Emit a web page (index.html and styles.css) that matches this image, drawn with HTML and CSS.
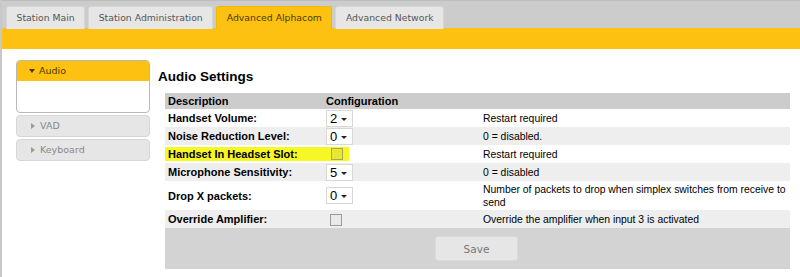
FILE: index.html
```html
<!DOCTYPE html>
<html lang="en">
<head>
    <meta charset="UTF-8">
    <meta name="viewport" content="width=device-width, initial-scale=1.0">
    <title>Advanced Alphacom - Audio</title>
    <link rel="stylesheet" href="styles.css">
</head>
<body>

    <div class="page">
        <div class="tabbar">
            <div class="tab">Station Main</div>
            <div class="tab">Station Administration</div>
            <div class="tab active">Advanced Alphacom</div>
            <div class="tab">Advanced Network</div>
        </div>
        <div class="subbar"></div>

        <div class="content">
            <div class="sidebar">
                <div class="menu open">
                    <div class="menu-head"><span class="arrow-down"></span>Audio</div>
                    <div class="menu-body"></div>
                </div>
                <div class="menu">
                    <div class="menu-head"><span class="arrow-right"></span>VAD</div>
                </div>
                <div class="menu">
                    <div class="menu-head"><span class="arrow-right"></span>Keyboard</div>
                </div>
            </div>

            <div class="main">
                <h2>Audio Settings</h2>
                <table class="settings">
                    <tr class="head">
                        <th class="c-desc">Description</th>
                        <th class="c-conf">Configuration</th>
                        <th class="c-note"></th>
                    </tr>
                    <tr>
                        <td class="label">Handset Volume:</td>
                        <td><span class="sel">2<i class="caret"></i></span></td>
                        <td class="note">Restart required</td>
                    </tr>
                    <tr class="alt">
                        <td class="label">Noise Reduction Level:</td>
                        <td><span class="sel">0<i class="caret"></i></span></td>
                        <td class="note">0 = disabled.</td>
                    </tr>
                    <tr>
                        <td class="label hl-cell"><span class="hl">Handset In Headset Slot:</span></td>
                        <td class="hl-cell"><span class="hl hl-box"><span class="check"></span></span></td>
                        <td class="note">Restart required</td>
                    </tr>
                    <tr class="alt">
                        <td class="label">Microphone Sensitivity:</td>
                        <td><span class="sel">5<i class="caret"></i></span></td>
                        <td class="note">0 = disabled</td>
                    </tr>
                    <tr class="tall">
                        <td class="label">Drop X packets:</td>
                        <td><span class="sel">0<i class="caret"></i></span></td>
                        <td class="note">Number of packets to drop when simplex switches from receive to send</td>
                    </tr>
                    <tr class="alt">
                        <td class="label">Override Amplifier:</td>
                        <td><span class="check"></span></td>
                        <td class="note">Override the amplifier when input 3 is activated</td>
                    </tr>
                    <tr class="foot">
                        <td></td>
                        <td></td>
                        <td><button class="save">Save</button></td>
                    </tr>
                </table>
            </div>
        </div>
    </div>

</body>
</html>
```

FILE: styles.css
```css
body {
    margin: 0;
    background-color: #fff;
    font-family: "DejaVu Sans", Verdana, sans-serif;
    color: #000;
}

.page {
    border-left: 2px solid #c8c8c8;
    min-height: 277px;
    box-sizing: border-box;
}

.tabbar {
    display: flex;
    gap: 3px;
    height: 28px;
    box-sizing: border-box;
    padding: 5px 0 0 4px;
    background-color: #cccccc;
    border-top: 1px solid #bdbdbd;
}

.tab {
    padding: 0 9.5px;
    height: 23px;
    line-height: 22px;
    box-sizing: border-box;
    background-color: #e6e6e6;
    border: 1px solid #d6d6d6;
    border-bottom: none;
    border-radius: 3px 3px 0 0;
    font-size: 9.3px;
    color: #555;
}

.tab.active {
    background-color: #fdc111;
    border-color: #f2b800;
    color: #4a3800;
}

.subbar {
    height: 21px;
    background-color: #fdc111;
}

.content {
    display: flex;
    padding: 11px 10px 0 14px;
}

.sidebar {
    width: 134px;
    flex-shrink: 0;
    display: flex;
    flex-direction: column;
    gap: 2px;
}

.menu {
    background-color: #e6e6e6;
    border: 1px solid #d6d6d6;
    border-radius: 4px;
    overflow: hidden;
}

.menu.open {
    background-color: #fff;
    border-color: #b8b8b8;
}

.menu-head {
    height: 20px;
    line-height: 20px;
    padding-left: 12px;
    font-size: 9.5px;
    color: #888;
}

.menu.open .menu-head {
    background-color: #fdc111;
    color: #4a3800;
}

.menu-body {
    height: 31px;
}

.arrow-down {
    display: inline-block;
    width: 0;
    height: 0;
    border-left: 3px solid transparent;
    border-right: 3px solid transparent;
    border-top: 4px solid #4a3800;
    margin-right: 4px;
    vertical-align: 1px;
}

.arrow-right {
    display: inline-block;
    width: 0;
    height: 0;
    border-top: 3px solid transparent;
    border-bottom: 3px solid transparent;
    border-left: 4px solid #999;
    margin: 0 5px 0 2px;
    vertical-align: 0;
}

.main {
    flex: 1;
    padding-left: 8px;
}

.main h2 {
    margin: 9px 0 8px 0;
    font-family: "Liberation Sans", Arial, sans-serif;
    font-size: 13.5px;
    font-weight: bold;
    line-height: 16px;
}

.settings {
    margin-left: 7px;
    width: 625px;
    border-collapse: collapse;
    font-family: "Liberation Sans", Arial, sans-serif;
    font-size: 11px;
}

.settings th {
    background-color: #cccccc;
    text-align: left;
    font-weight: bold;
    height: 16px;
    padding: 0 3px;
}

.settings .c-desc { width: 152px; }
.settings .c-conf { width: 151px; }

.settings td {
    height: 18px;
    padding: 0 3px;
    vertical-align: middle;
}

.settings tr.alt td {
    background-color: #eeeeee;
}

.settings tr.tall td {
    height: 29px;
}

.settings .label {
    font-weight: bold;
}

.settings td.note {
    font-size: 10.4px;
    line-height: 13px;
    padding-right: 0;
}

.settings td.hl-cell {
    padding: 0;
}

.hl {
    display: block;
    background-color: #f7f725;
    line-height: 14px;
    padding: 0 3px;
}

.hl-box {
    display: inline-block;
    width: 26px;
    height: 14px;
    box-sizing: border-box;
    padding: 1px 0 0 8px;
    vertical-align: middle;
}

.sel {
    display: inline-block;
    position: relative;
    width: 27px;
    height: 17px;
    box-sizing: border-box;
    border: 1px solid #d8d8d8;
    background-color: #fff;
    font-size: 13px;
    line-height: 15px;
    padding-left: 3px;
    vertical-align: middle;
}

.caret {
    position: absolute;
    right: 5px;
    top: 7px;
    width: 0;
    height: 0;
    border-left: 3px solid transparent;
    border-right: 3px solid transparent;
    border-top: 3px solid #222;
}

.check {
    display: inline-block;
    width: 12px;
    height: 12px;
    box-sizing: border-box;
    border: 1px solid #9a9a9a;
    background-color: #e9e9e9;
    vertical-align: middle;
    margin-left: 4px;
}

.hl-box .check {
    margin-left: 0;
    background-color: #e8e830;
    border-color: #a8a850;
    vertical-align: top;
}

.settings tr.foot td {
    background-color: #d3d3d3;
    height: 41px;
}

.save {
    width: 83px;
    height: 25px;
    background-color: #e6e6e6;
    border: 1px solid #dadada;
    border-radius: 3px;
    font-family: "DejaVu Sans", Verdana, sans-serif;
    font-size: 10.5px;
    color: #777;
    margin-left: -48px;
    cursor: pointer;
}
```
